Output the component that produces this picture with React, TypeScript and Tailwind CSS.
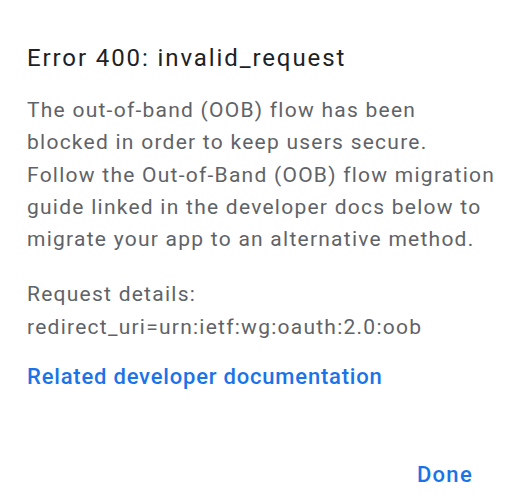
import React from 'react';

const App = () => {
  return (
    <div className="w-[512px] h-[503px] bg-white flex flex-col font-['Roboto',sans-serif] pl-[27px] pr-[39px]">
      <h1 className="mt-[42px] text-[24px] leading-[32px] tracking-[1.9px] font-normal text-[#202124] whitespace-nowrap">
        Error 400: invalid_request
      </h1>
      <div className="mt-[20px] text-[21px] leading-[32.3px] tracking-[1.25px] text-[#5f6368] whitespace-nowrap">
        <p>
          The out-of-band (OOB) flow has been
          <br />
          blocked in order to keep users secure.
          <br />
          Follow the Out-of-Band (OOB) flow migration
          <br />
          guide linked in the developer docs below to
          <br />
          migrate your app to an alternative method.
        </p>
        <p className="mt-[23px]">
          Request details:
          <br />
          redirect_uri=urn:ietf:wg:oauth:2.0:oob
        </p>
      </div>
      <a
        href="#"
        className="mt-[18px] self-start text-[22px] leading-[32px] tracking-[0.8px] font-medium text-[#1a73e8] whitespace-nowrap"
      >
        Related developer documentation
      </a>
      <div className="mt-[66px] flex justify-end">
        <button className="text-[22px] leading-[32px] tracking-[1.3px] font-medium text-[#1a73e8]">Done</button>
      </div>
    </div>
  );
};

export default App;
